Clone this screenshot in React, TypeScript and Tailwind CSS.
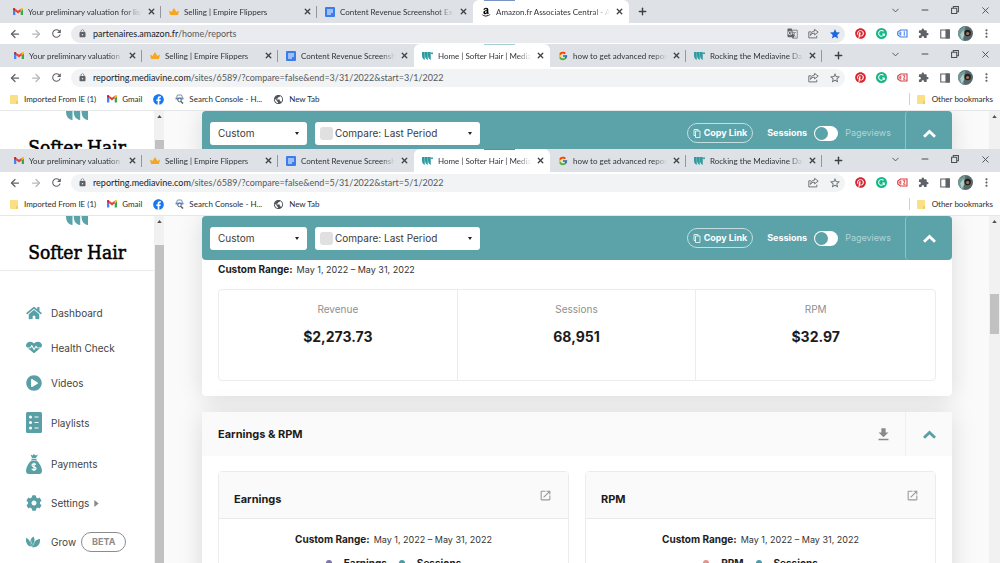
import React from "react";
import { FaAmazon, FaCog, FaFacebook, FaHeartbeat, FaHome, FaPinterest, FaPlayCircle } from "react-icons/fa";
import { FcGoogle } from "react-icons/fc";
import { MdExtension, MdFileDownload, MdGTranslate, MdLock, MdMoreVert, MdOpenInNew, MdPublic, MdRefresh, MdStar, MdStarBorder } from "react-icons/md";
import { ArrowLeft, ArrowRight, ChevronDown, Minus, Plus, X } from "lucide-react";

type IconName = "gmail" | "crown" | "docs" | "amazon" | "mv" | "google";
type Tab = { icon: IconName; title: string; active?: boolean };

function Gmail() {
  return (
    <svg viewBox="0 0 24 18" className="w-[10px] shrink-0">
      <path d="M0 2v14a2 2 0 0 0 2 2h3.500V8z" fill="#4285f4" />
      <path d="M24 2v14a2 2 0 0 1-2 2h-3.500V8z" fill="#34a853" />
      <path d="M18.500 1.500V8L24 4V2.400c0-2.200-2.500-3.200-4.200-1.900z" fill="#fbbc04" />
      <path d="M5.500 8V1.500L12 6.500l6.500-5V8L12 13z" fill="#ea4335" />
      <path d="M0 2.400V4l5.500 4V1.500L4.200.5C2.500-.8 0 .2 0 2.400z" fill="#c5221f" />
    </svg>
  );
}

function Crown() {
  return (
    <svg viewBox="0 0 20 14" className="w-[10px] shrink-0" fill="#f5a623">
      <path d="M0 5l5 3 5-8 5 8 5-3-2 9H2z" />
    </svg>
  );
}

function Docs() {
  return (
    <svg viewBox="0 0 20 20" className="w-[10px] shrink-0">
      <rect width="20" height="20" rx="2" fill="#3b7ded" />
      <path d="M4 6h12M4 10h12M4 14h8" stroke="#fff" strokeWidth="2" />
    </svg>
  );
}

function Mediavine() {
  return (
    <svg viewBox="0 0 22 16" className="w-[11px] shrink-0" fill="#2f9ba0">
      <path d="M0 0h5.500v16C1 14 0 10 0 6zM6 0h5.500v16C7 14 6 10 6 6zM12 0h5.500v16C13 14 12 10 12 6z" />
      <circle cx="20" cy="2.500" r="2" />
    </svg>
  );
}

function Favicon({ name }: { name: IconName }) {
  switch (name) {
    case "gmail":
      return <Gmail />;
    case "crown":
      return <Crown />;
    case "docs":
      return <Docs />;
    case "amazon":
      return (
        <span className="flex w-[10px] shrink-0 justify-center">
          <FaAmazon className="size-[10px] text-black" />
        </span>
      );
    case "mv":
      return <Mediavine />;
    default:
      return <FcGoogle className="size-[10px] shrink-0" />;
  }
}

function TabStrip({ tabs, wide }: { tabs: Tab[]; wide?: boolean }) {
  return (
    <div className={`flex h-[23px] shrink-0 bg-[#dee1e6] ${wide ? "pl-[5px]" : "pl-[6px]"}`}>
      {tabs.map((t, i) => (
        <div
          key={i}
          className={`flex min-w-0 items-center gap-[5px] pl-2 pr-[5px] ${wide ? "w-[156px]" : "w-[136px]"} ${
            t.active ? "rounded-t-md bg-white" : ""
          }`}
        >
          <Favicon name={t.icon} />
          <span className="min-w-0 flex-1 overflow-hidden whitespace-nowrap text-[8px] leading-4 text-[#303338] [mask-image:linear-gradient(to_right,black_85%,transparent)]">
            {t.title}
          </span>
          <button aria-label="Close tab" className="shrink-0 text-[#3c4043]">
            <X className="size-[9px]" strokeWidth={3.5} />
          </button>
          {!t.active && !tabs[i + 1]?.active && <span className="-ml-px -mr-[5px] h-3 w-px bg-[#94989e]" />}
        </div>
      ))}
      <button aria-label="New tab" className={`text-[#3c4043] ${wide ? "ml-2" : "ml-[11px]"}`}>
        <Plus className="size-[11px]" strokeWidth={3} />
      </button>
      <div className="ml-auto flex h-5 text-[#4a4d51]">
        <button aria-label="Search tabs" className="grid w-[30px] place-items-center">
          <ChevronDown className="size-[11px]" strokeWidth={2} />
        </button>
        <button aria-label="Minimize" className="grid w-[30px] place-items-center">
          <Minus className="size-[10px]" strokeWidth={2.5} />
        </button>
        <button aria-label="Restore" className="grid w-[30px] place-items-center">
          <svg viewBox="0 0 14 14" className="size-[8px]" fill="none" stroke="currentColor" strokeWidth="1.8">
            <path d="M1 4h9v9H1zM4 4V1h9v9h-3" />
          </svg>
        </button>
        <button aria-label="Close" className="grid w-[30px] place-items-center">
          <X className="size-[11px]" strokeWidth={2} />
        </button>
      </div>
    </div>
  );
}

function Cell({ label, children }: { label: string; children: React.ReactNode }) {
  return (
    <button aria-label={label} className="grid w-[21px] shrink-0 place-items-center text-[#5f6368]">
      {children}
    </button>
  );
}

function Share() {
  return (
    <svg viewBox="0 0 20 20" className="size-[11px]" fill="none" stroke="currentColor" strokeWidth="1.6">
      <path d="M6 7H1.500v11H16v-4" />
      <path d="M12 2.500l6.500 5-6.500 5v-3c-4 0-6 1-7.500 4C5 9 7.500 6 12 5.500z" strokeLinejoin="round" />
    </svg>
  );
}

function TagIcon({ digit, red }: { digit: string; red?: boolean }) {
  return (
    <svg viewBox="0 0 22 18" className={`w-[11px] ${red ? "text-[#d93a3f]" : "text-[#3b7ded]"}`} fill="none" stroke="currentColor">
      <path d="M7 2h13v14H7L1.500 12V6z" strokeWidth="2.200" />
      <path d="M4.500 7v4M7.500 5v8" strokeWidth="2" />
      {digit === "1" ? <path d="M14.500 4.500v9" strokeWidth="2" /> : <path d="M11.500 5.500h4.500l-3 7h4" strokeWidth="1.800" />}
    </svg>
  );
}

function Toolbar({ host, path, starred }: { host: string; path: string; starred?: boolean }) {
  return (
    <div className="flex h-[21px] shrink-0 items-center bg-white pl-1 pr-[3px]">
      <Cell label="Back">
        <ArrowLeft className="size-[12px]" strokeWidth={2.5} />
      </Cell>
      <Cell label="Forward">
        <ArrowRight className="size-[12px] text-[#b5b8bb]" strokeWidth={2.5} />
      </Cell>
      <Cell label="Reload">
        <MdRefresh className="size-[13px]" />
      </Cell>
      <div className={`ml-1 mr-[5px] flex h-[18px] min-w-0 flex-1 items-center rounded-full pl-[7px] ${starred ? "bg-[#e9ebee]" : "bg-[#f1f3f4]"}`}>
        <MdLock className="size-[9px] shrink-0 text-[#5f6368]" />
        <p className="ml-[6px] min-w-0 flex-1 truncate text-[9px] leading-4 text-[#55595e]">
          <span className="text-[#202124]">{host}</span>
          {path}
        </p>
        {starred && (
          <Cell label="Translate">
            <MdGTranslate className="size-[11px]" />
          </Cell>
        )}
        <Cell label="Share">
          <Share />
        </Cell>
        <Cell label="Bookmark">
          {starred ? <MdStar className="size-[12px] text-[#1a67e0]" /> : <MdStarBorder className="size-[12px]" />}
        </Cell>
      </div>
      <Cell label="Pinterest">
        <FaPinterest className="size-[11px] text-[#d8232e]" />
      </Cell>
      <Cell label="Grammarly">
        <svg viewBox="0 0 24 24" className="size-[11px]">
          <circle cx="12" cy="12" r="12" fill="#15b886" />
          <path d="M16.500 7.500A6.200 6.200 0 1 0 18 13h-4.500M18 13v4.500" fill="none" stroke="#fff" strokeWidth="2.200" />
        </svg>
      </Cell>
      <Cell label="Tag Assistant">
        <TagIcon digit={starred ? "1" : "2"} red={!starred} />
      </Cell>
      <Cell label="Extensions">
        <MdExtension className="size-[11px]" />
      </Cell>
      <Cell label="Side panel">
        <svg viewBox="0 0 20 20" className="size-[10px]" fill="none" stroke="currentColor" strokeWidth="2.200">
          <path d="M1.500 2h17v16h-17z" />
          <path d="M12 2h6.500v16H12z" fill="currentColor" />
        </svg>
      </Cell>
      <Cell label="Profile">
        <svg viewBox="0 0 28 28" className="size-[15px] rounded-full">
          <rect width="28" height="28" fill="#56686a" />
          <path d="M0 8L14 0l-4 28H0z" fill="#6f9a96" />
          <path d="M4 16l6-9 2 10-5 9z" fill="#b5cbc8" />
          <circle cx="18" cy="13" r="6" fill="#221f20" />
          <circle cx="18" cy="14" r="3" fill="#a5765f" />
        </svg>
      </Cell>
      <Cell label="Menu">
        <MdMoreVert className="size-[13px]" />
      </Cell>
    </div>
  );
}

function Folder() {
  return (
    <svg viewBox="0 0 16 18" className="w-[8px] shrink-0">
      <rect width="16" height="18" rx="1.500" fill="#fbdf85" />
      <path d="M12 18v-5l4-2v5.500a1.500 1.500 0 0 1-1.500 1.500z" fill="#f3cc5e" />
    </svg>
  );
}

function Bookmarks() {
  return (
    <nav className="flex h-[23px] shrink-0 items-center gap-[11px] border-b border-[#e4e6e8] bg-white pl-[10px] pr-[7px] text-[8px] leading-4 text-[#2a2c2f]">
      <a href="#" className="flex items-center gap-[6px]">
        <Folder />
        Imported From IE (1)
      </a>
      <a href="#" className="flex items-center gap-[5px]">
        <Gmail />
        Gmail
      </a>
      <a href="#" aria-label="Facebook">
        <FaFacebook className="size-[11px] text-[#1877f2]" />
      </a>
      <a href="#" className="flex items-center gap-[5px]">
        <svg viewBox="0 0 18 20" className="w-[9px]" fill="none">
          <path d="M3 7l2-5h8l2 5" stroke="#8a8f95" strokeWidth="2" />
          <path d="M1 7h16v4H1z" fill="#5b8fe0" />
          <circle cx="9" cy="12" r="3.500" fill="#fff" stroke="#5a5f66" strokeWidth="2" />
          <path d="M12 15l4 4" stroke="#5a5f66" strokeWidth="3" />
        </svg>
        Search Console - H...
      </a>
      <a href="#" className="flex items-center gap-[5px]">
        <MdPublic className="size-[11px] text-[#50545a]" />
        New Tab
      </a>
      <a href="#" className="ml-auto flex items-center gap-[7px] border-l border-[#d0d3d6] pl-[7px] leading-3">
        <Folder />
        Other bookmarks
      </a>
    </nav>
  );
}

function ScrollUp() {
  return (
    <svg viewBox="0 0 6 4" className="mx-auto mt-1 h-[3px] w-[5px]" fill="#505050">
      <path d="M3 0l3 4H0z" />
    </svg>
  );
}

function ChevronBold() {
  return (
    <svg viewBox="0 0 26 18" className="h-[9px] w-[13px]" fill="none" stroke="currentColor" strokeWidth="5.500">
      <path d="M2 15.500L13 5l11 10.500" />
    </svg>
  );
}

function MoneyBag() {
  return (
    <svg viewBox="0 0 32 40" className="h-5 w-4" fill="#58a0a6">
      <path d="M9 1l4 2 3-3 3 3 5-2-4 7h-8zM11 9.500h10v2.500H11z" />
      <path d="M11 13h10c6 5 10 12 11 20 0 5-2 7-6 7H6c-4 0-6-2-6-7 1-8 5-15 11-20z" />
      <path d="M20 21c-2-2-8-2-8 1.500 0 4.500 8 2 8 6.500 0 3.500-6 3.500-8.500 1M16 17.500V34" fill="none" stroke="#fff" strokeWidth="2.400" />
    </svg>
  );
}

function Grow() {
  return (
    <svg viewBox="0 0 28 24" className="h-[12px] w-[14px]" fill="#58a0a6">
      <path d="M10 21C2 20-1 12 0 4c6 1 9 8 10 17z" />
      <path d="M12 22C6 14 7 6 15 1c4 7 3 15-3 21z" />
      <path d="M13 23c0-9 5-16 15-17 1 10-4 17-15 17z" />
      <path d="M8 5l4 12M19 6l-5 13" stroke="#fff" strokeWidth="1" />
    </svg>
  );
}

function Playlist() {
  return (
    <svg viewBox="0 0 32 42" className="h-[21px] w-[16px]">
      <rect width="32" height="42" rx="3" fill="#58a0a6" />
      <path d="M17 10h8M17 21h8M17 32h8" stroke="#fff" strokeWidth="2" />
      <circle cx="9" cy="10" r="3" fill="#fff" />
      <circle cx="9" cy="21" r="3" fill="#fff" />
      <circle cx="9" cy="32" r="3" fill="#fff" />
    </svg>
  );
}

const menu = [
  { label: "Dashboard", icon: <FaHome className="h-[14px] w-4" /> },
  { label: "Health Check", icon: <FaHeartbeat className="h-[13px] w-4" preserveAspectRatio="none" /> },
  { label: "Videos", icon: <FaPlayCircle className="size-4" /> },
  { label: "Playlists", icon: <Playlist /> },
  { label: "Payments", icon: <MoneyBag /> },
  { label: "Settings", icon: <FaCog className="size-4" />, arrow: true },
  { label: "Grow", icon: <Grow />, beta: true },
];

function Sidebar() {
  return (
    <aside className="w-[154px] shrink-0 bg-white">
      <div className="flex h-[55px] flex-col items-center justify-between border-b border-[#ebebeb]">
        <svg viewBox="0 0 22 9" className="h-[9px] w-[22px] shrink-0" fill="#5ba3a8">
          <path d="M0 0h6.500v9C2 8.500 0 5 0 0zM7.700 0h6.500v9c-4.500-.5-6.500-4-6.500-9zM15.500 0H22v9c-4.500-.5-6.500-4-6.500-9z" />
        </svg>
        <h1 className="mb-[6px] whitespace-nowrap font-['DejaVu_Serif_Condensed','DejaVu_Serif',serif] text-[19px] leading-6 text-black [-webkit-text-stroke:0.5px_black]">
          Softer Hair
        </h1>
      </div>
      <ul className="mt-[35px] flex flex-col gap-[21px] pl-[26px] text-[10px] leading-3 text-[#444]">
        {menu.map((m) => (
          <li key={m.label}>
            <a href="#" className="flex items-center">
              <span className="w-[25px] text-[#58a0a6]">{m.icon}</span>
              {m.label}
              {m.arrow && (
                <svg viewBox="0 0 5 8" className="ml-[5px] h-[7px] w-[5px]" fill="#8a8a8a">
                  <path d="M0 0l5 4-5 4z" />
                </svg>
              )}
              {m.beta && (
                <span className="ml-[5px] rounded-full border border-[#8c8c8c] px-[10px] py-[3px] text-[9px] font-bold leading-3 text-[#8c8c8c]">
                  BETA
                </span>
              )}
            </a>
          </li>
        ))}
      </ul>
    </aside>
  );
}

function Caret() {
  return (
    <svg viewBox="0 0 4 3" className="pointer-events-none mr-2 h-[3px] w-[4px] shrink-0" fill="#222">
      <path d="M0 0h4L2 3z" />
    </svg>
  );
}

function FilterBar() {
  return (
    <div className="flex h-[44px] items-center rounded bg-[#5ba2a9] pl-2 text-white">
      <div className="flex h-[23px] w-[97px] items-center rounded-[3px] bg-white">
        <select aria-label="Date range" className="min-w-0 flex-1 appearance-none bg-transparent pl-2 text-[10px] leading-4 text-[#3b3b3b]">
          <option>Custom</option>
        </select>
        <Caret />
      </div>
      <div className="ml-2 flex h-[23px] w-[165px] items-center rounded-[3px] bg-white pl-[5px]">
        <input type="checkbox" aria-label="Enable comparison" className="size-[13px] appearance-none rounded-[3px] bg-[#e0e0e0]" />
        <select aria-label="Compare period" className="min-w-0 flex-1 appearance-none bg-transparent pl-[2px] text-[10px] leading-4 text-[#3b3b3b]">
          <option>Compare: Last Period</option>
        </select>
        <Caret />
      </div>
      <button className="ml-auto flex h-5 items-center gap-[3px] rounded-full border border-[#c3dfe1] px-[5px] text-[9px] font-bold leading-4">
        <svg viewBox="0 0 16 18" className="h-[9px] w-[8px]" fill="none" stroke="currentColor" strokeWidth="1.600">
          <path d="M5 4h9v13H5zM5 13H2V1h8v3" />
        </svg>
        Copy Link
      </button>
      <label className="ml-[14px] flex items-center gap-[7px] text-[9px] leading-4">
        <span className="font-bold">Sessions</span>
        <span className="flex h-[15px] w-6 rounded-full bg-white p-px">
          <input type="checkbox" className="size-[13px] appearance-none rounded-full bg-[#5ba2a9]" />
        </span>
        <span className="text-[#b2d5d8]">Pageviews</span>
      </label>
      <button aria-label="Collapse" className="ml-[14px] grid h-full w-[47px] place-items-center rounded border-l border-[#8fc0c5]">
        <ChevronBold />
      </button>
    </div>
  );
}

function Range() {
  return (
    <p className="text-[9px] leading-4 text-[#333]">
      <strong className="mr-1 text-[10px] font-bold text-[#1c1c1c]">Custom Range:</strong>
      May 1, 2022 – May 31, 2022
    </p>
  );
}

function ChartCard({ title, dot, label }: { title: string; dot: string; label: string }) {
  return (
    <section className="flex-1 rounded border border-[#ececec]">
      <header className="flex h-[47px] items-center justify-between border-b border-[#e9e9e9] bg-[#fafafa] pl-[15px] pr-4">
        <h3 className="mt-2 text-[11px] font-bold leading-4 text-[#1c1c1c]">{title}</h3>
        <button aria-label={`Open ${title}`} className="text-[#999]">
          <MdOpenInNew className="size-[13px]" />
        </button>
      </header>
      <div className="flex flex-col items-center gap-[7px] pt-3">
        <Range />
        <div className="flex items-center gap-3 text-[10px] font-bold leading-4 text-[#1c1c1c]">
          <span className="flex items-center gap-3">
            <i className={`size-[6px] rounded-full ${dot}`} />
            {label}
          </span>
          <span className="flex items-center gap-3">
            <i className="size-[6px] rounded-full bg-[#4a9da4]" />
            Sessions
          </span>
        </div>
      </div>
    </section>
  );
}

const stats = [
  ["Revenue", "$2,273.73"],
  ["Sessions", "68,951"],
  ["RPM", "$32.97"],
];

function Dashboard() {
  return (
    <div className="flex min-h-0 flex-1 overflow-hidden font-['Inter','Liberation_Sans',sans-serif]">
      <Sidebar />
      <div className="w-[10px] shrink-0 bg-[#f1f1f1]">
        <ScrollUp />
        <div className="ml-px mt-[22px] h-[400px] bg-[#c1c1c1]" />
      </div>
      <main className="min-w-0 flex-1 bg-[#fafafa] pl-[38px] pr-[37px]">
        <section className="rounded bg-white shadow-[0_2px_24px_rgba(0,0,0,0.13)]">
          <FilterBar />
          <div className="px-4 pb-[15px] pt-px">
            <Range />
            <dl className="mt-[11px] grid h-[92px] grid-cols-3 divide-x divide-[#ececec] rounded border border-[#ececec] text-center">
              {stats.map(([k, v]) => (
                <div key={k} className="pt-[11px]">
                  <dt className="text-[10px] leading-4 text-[#8f8f8f]">{k}</dt>
                  <dd className="mt-2 text-[14px] font-bold leading-6 text-[#1c1c1c]">{v}</dd>
                </div>
              ))}
            </dl>
          </div>
        </section>
        <section className="mt-4 bg-white shadow-[0_2px_24px_rgba(0,0,0,0.13)]">
          <header className="flex h-[44px] items-center bg-[#fafafa] pl-4">
            <h2 className="flex-1 text-[11px] font-bold leading-4 text-[#1c1c1c]">Earnings &amp; RPM</h2>
            <button aria-label="Download" className="mr-[13px] text-[#8a8a8a]">
              <MdFileDownload className="size-[17px]" />
            </button>
            <button aria-label="Collapse" className="grid h-full w-[47px] place-items-center border-l border-[#efefef] text-[#58a0a6]">
              <ChevronBold />
            </button>
          </header>
          <div className="flex gap-4 px-4 pb-4 pt-[15px]">
            <ChartCard title="Earnings" dot="bg-[#7c74ab]" label="Earnings" />
            <ChartCard title="RPM" dot="bg-[#e29490]" label="RPM" />
          </div>
        </section>
      </main>
      <div className="w-[11px] shrink-0 bg-[#f1f1f1]">
        <ScrollUp />
        <div className="mx-px mt-[71px] h-10 bg-[#c1c1c1]" />
      </div>
    </div>
  );
}

const amazonTabs: Tab[] = [
  { icon: "gmail", title: "Your preliminary valuation for list" },
  { icon: "crown", title: "Selling | Empire Flippers" },
  { icon: "docs", title: "Content Revenue Screenshot Exa" },
  { icon: "amazon", title: "Amazon.fr Associates Central - A", active: true },
];

const mediavineTabs: Tab[] = [
  { icon: "gmail", title: "Your preliminary valuation f" },
  { icon: "crown", title: "Selling | Empire Flippers" },
  { icon: "docs", title: "Content Revenue Screensh" },
  { icon: "mv", title: "Home | Softer Hair | Mediav", active: true },
  { icon: "google", title: "how to get advanced repor" },
  { icon: "mv", title: "Rocking the Mediavine Das" },
];

export default function App() {
  return (
    <div className="flex h-screen flex-col overflow-hidden bg-white font-['Lato','Noto_Sans',sans-serif]">
      <div className="relative shrink-0">
        <TabStrip tabs={amazonTabs} wide />
        <Toolbar host="partenaires.amazon.fr" path="/home/reports" starred />
        <div className="absolute left-[484px] top-0 h-px w-[31px] bg-[#7795c4]" />
      </div>
      <div className="relative flex h-[105px] shrink-0 flex-col overflow-hidden">
        <TabStrip tabs={mediavineTabs} />
        <Toolbar host="reporting.mediavine.com" path="/sites/6589/?compare=false&end=3/31/2022&start=3/1/2022" />
        <Bookmarks />
        <Dashboard />
        <div className="absolute left-[484px] top-0 h-px w-[31px] bg-[#a3cdd3]" />
      </div>
      <div className="relative flex min-h-0 flex-1 flex-col">
        <TabStrip tabs={mediavineTabs} />
        <Toolbar host="reporting.mediavine.com" path="/sites/6589/?compare=false&end=5/31/2022&start=5/1/2022" />
        <Bookmarks />
        <Dashboard />
        <div className="absolute left-[484px] top-0 h-px w-[31px] bg-[#4b979f]" />
      </div>
    </div>
  );
}
